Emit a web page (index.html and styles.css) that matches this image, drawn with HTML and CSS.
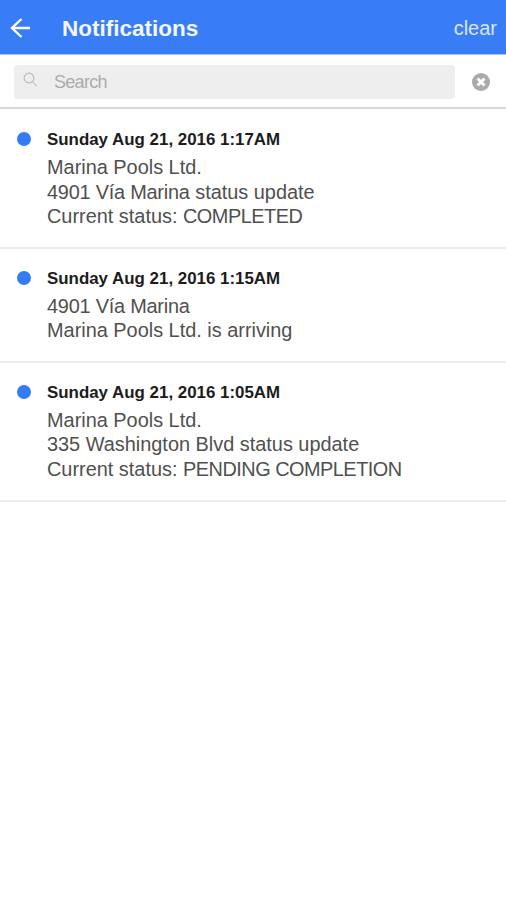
FILE: index.html
```html
<!DOCTYPE html>
<html lang="en">
<head>
<meta charset="utf-8">
<title>Notifications</title>
<link rel="stylesheet" href="styles.css">
</head>
<body>
<header class="bar">
  <svg class="back" width="22" height="22" viewBox="0 0 22 22"><path d="M20 11H2M11.500 2L2 11l9.500 9"/></svg>
  <h1 class="title">Notifications</h1>
  <span class="clear">clear</span>
</header>
<div class="search">
  <div class="field">
    <svg class="glass" width="16" height="16" viewBox="0 0 16 16"><circle cx="6" cy="6" r="4.900"/><path d="M9.500 9.500L13.500 14"/></svg>
    <span class="hint">Search</span>
  </div>
  <svg class="reset" width="18" height="18" viewBox="0 0 18 18"><circle cx="9" cy="9" r="9"/><path d="M5.500 5.500l7 7M12.500 5.500l-7 7"/></svg>
</div>
<main class="list">
  <article class="item">
    <span class="dot"></span>
    <div class="body">
      <div class="date">Sunday Aug 21, 2016 1:17AM</div>
      <div class="line">Marina Pools Ltd.</div>
      <div class="line"><span class="place">4901 Vía Marina</span> status update</div>
      <div class="line">Current status: <span class="status">COMPLETED</span></div>
    </div>
  </article>
  <article class="item">
    <span class="dot"></span>
    <div class="body">
      <div class="date">Sunday Aug 21, 2016 1:15AM</div>
      <div class="line"><span class="place">4901 Vía Marina</span></div>
      <div class="line">Marina Pools Ltd. is arriving</div>
    </div>
  </article>
  <article class="item">
    <span class="dot"></span>
    <div class="body">
      <div class="date">Sunday Aug 21, 2016 1:05AM</div>
      <div class="line">Marina Pools Ltd.</div>
      <div class="line">335 Washington Blvd status update</div>
      <div class="line">Current status: <span class="status">PENDING COMPLETION</span></div>
    </div>
  </article>
</main>
</body>
</html>
```
FILE: styles.css
```css
* { box-sizing: border-box; }
body { margin: 0; background: #fff; font-family: "Liberation Sans", Arial, sans-serif; white-space: nowrap; }
svg { display: block; flex: none; }
.bar { height: 54px; padding: 1px 9px 0 10px; display: flex; align-items: center; background: #397df6; box-shadow: 0 1px #a3c3fb; }
.back { fill: none; stroke: #fff; stroke-width: 2.4; }
.title { margin: 2px auto 0 30px; font-size: 22.5px; line-height: 28px; font-weight: bold; color: #f4f8ff; }
.clear { font-size: 20px; line-height: 26px; color: #d8e5ff; }
.search { height: 55px; padding: 2px 16px 0 14px; display: flex; align-items: center; justify-content: space-between; border-bottom: 2px solid #d9d9d9; }
.field { width: 441px; height: 34px; padding-left: 9px; border-radius: 4px; background: #eee; display: flex; align-items: center; }
.glass { margin-bottom: 3px; fill: none; stroke: #b8b8b8; stroke-width: 1.1; }
.hint { margin: 2px 0 0 15px; font-size: 18px; letter-spacing: -0.7px; color: #acacac; }
.reset { fill: #aaa; stroke: #fff; stroke-width: 3; }
.reset circle { stroke: none; }
.item { display: flex; padding: 19px 0 18.2px 17px; border-bottom: 2px solid #ececec; }
.item + .item { padding-top: 18px; }
.dot { width: 14px; height: 14px; margin: 4px 16px 0 0; border-radius: 50%; background: #357cf3; }
.date { height: 27px; font-size: 16.9px; line-height: 23px; font-weight: bold; color: #1c1c1c; }
.line { font-size: 19.9px; line-height: 24.5px; color: #505050; }
.place { letter-spacing: -0.22px; }
.status { letter-spacing: -0.5px; }
```
